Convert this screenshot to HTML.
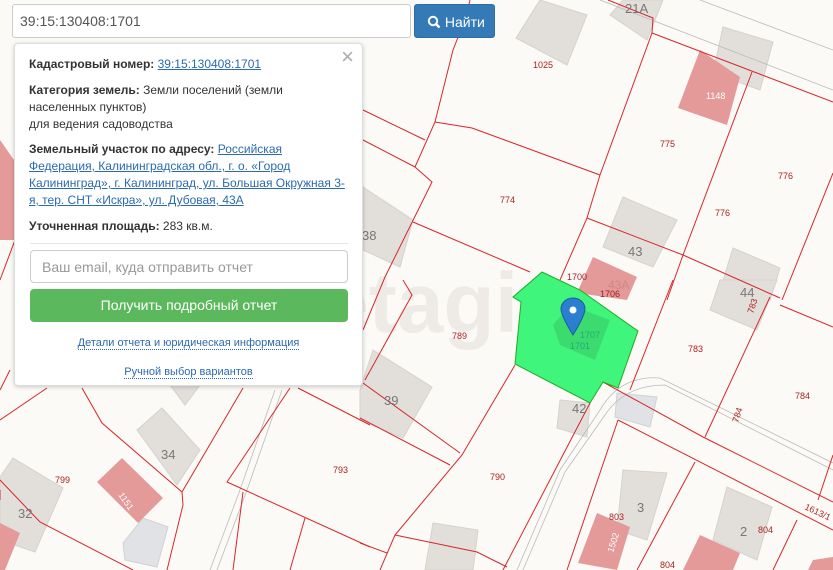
<!DOCTYPE html>
<html><head><meta charset="utf-8"><style>
body{margin:0;width:833px;height:570px;overflow:hidden;position:relative;background:#fbfaf6;font-family:"Liberation Sans",sans-serif}
svg{position:absolute;left:0;top:0}
.inp{position:absolute;left:12px;top:4px;width:399px;height:34px;box-sizing:border-box;border:1px solid #ccc;border-radius:3px;background:#fff;font-size:14px;color:#555;padding:8px 7px}
.btn{position:absolute;left:414px;top:4px;width:81px;height:34px;box-sizing:border-box;background:#337ab7;border:1px solid #2e6da4;border-radius:3px;color:#fff;font-size:14px;padding:8px 0 0 12px}
.pop{position:absolute;left:14px;top:43px;width:349px;height:343px;box-sizing:border-box;background:#fff;border:1px solid #ddd;border-radius:4px;box-shadow:0 1px 4px rgba(0,0,0,.2);font-size:12px;color:#333;line-height:17px}
.pop p{margin:0;position:absolute;left:14px;width:322px}
b{font-weight:bold}
a{color:#2a6ab0;text-decoration:underline}
.x{position:absolute;right:8px;top:4px;font-size:22px;color:#aaa}
.em{position:absolute;left:15px;top:206px;width:318px;height:33px;box-sizing:border-box;border:1px solid #ccc;border-radius:4px;color:#999;font-size:14px;padding:8px 11px}
.gb{position:absolute;left:15px;top:245px;width:318px;height:33px;box-sizing:border-box;background:#5cb85c;border-radius:4px;color:#fff;font-size:14px;text-align:center;padding-top:8px}
.dl{position:absolute;left:0;width:347px;text-align:center;font-size:11px}
.dl span{color:#2a6ab0;border-bottom:1px dotted #2a6ab0}
</style></head><body>
<svg width="833" height="570" viewBox="0 0 833 570">
<text x="322" y="332" font-size="84" fill="#eeebe6" font-family="Liberation Sans" font-weight="bold">etagi</text>
<g fill="#e2dfdb" stroke="#d6d2cd" stroke-width="1">
<polygon points="516,38 540,0 587,15 567,65"/>
<polygon points="610,15 623,0 663,0 647,40"/>
<polygon points="723,27 773,42 760,90 713,73"/>
<polygon points="623,197 677,220 653,267 603,247"/>
<polygon points="733,248 780,268 770,300 720,290"/>
<polygon points="720,280 777,280 757,330 710,310"/>
<polygon points="363,187 413,220 400,267 363,250"/>
<polygon points="373,350 432,387 403,438 360,420 360,390"/>
<polygon points="560,400 590,403 587,437 557,428"/>
<polygon points="623,470 667,473 647,540 617,530"/>
<polygon points="727,487 772,507 757,560 713,540"/>
<polygon points="433,523 478,530 473,570 425,570"/>
<polygon points="137,430 162,408 200,450 177,485"/>
<polygon points="0,477 13,458 63,488 35,552 0,540"/>
<polygon points="170,385 200,385 185,405"/>
</g>
<g fill="#e0e2e6" stroke="#d0d2d6"><polygon points="123,543 143,518 168,527 157,567 125,560"/><polygon points="617,393 657,397 650,427 615,417"/></g>
<g fill="#e59a9a">
<polygon points="700,50 740,77 727,125 678,108"/>
<polygon points="593,257 637,277 627,300 577,293"/>
<polygon points="97,482 122,458 163,498 138,523"/>
<polygon points="597,513 630,527 617,570 578,563"/>
<polygon points="700,535 740,553 733,570 683,570"/>
<polygon points="813,560 833,557 833,570 808,570"/>
<polygon points="0,523 20,533 5,570 0,570"/>
<polygon points="0,140 14,160 14,240 0,240"/>
</g>
<g fill="none" stroke="#bbb" stroke-width="0.8"><path d="M517,570 L560,470 L600,410 Q620,375 660,378 L833,463 M523,570 L565,472 L605,415 Q625,385 665,385 L833,470 M210,570 L240,490 L275,390 M217,570 L247,490 L282,390 M600,0 L833,90 M700,0 L833,50"/></g>
<g fill="none" stroke="#d8262b" stroke-width="1">
<path d="M470,0 L466,17 L453,50 L435,122 L415,167 L432,182 L385,277 L363,330"/>
<path d="M363,110 L425,140 M363,140 L415,167 M435,122 L472,128 L600,175 M413,222 L530,272"/>
<path d="M608,0 L653,18 L652,33 L600,175 L587,218 L560,280"/>
<path d="M587,218 L683,255 L780,298 M652,33 L833,102 M752,72 L683,255 L667,300 M833,173 L782,300"/>
<path d="M403,280 L412,295 L365,380 M363,383 L460,453 M360,418 L450,465"/>
<path d="M515,365 L462,455 L395,535 L380,570 M395,535 L477,552 L507,567 M360,543 L387,553"/>
<path d="M590,403 L503,570 M603,382 L703,437 L833,502 M618,420 L833,530 M618,420 L567,570"/>
<path d="M673,280 L630,390 M770,297 L705,437 M695,462 L637,570 M780,305 L833,327 M818,500 L833,455 M797,520 L773,570"/>
<path d="M0,420 L47,388 M82,388 L102,423 L182,492 L183,505 L167,570 M182,492 L243,388 M290,388 L227,482 L370,547 M243,492 L233,570 M305,518 L290,570 M0,480 L40,522 L133,570 M298,388 L370,425"/>
<path d="M0,280 L15,240 M0,390 L10,370 M0,500 L0,490"/>
</g>
<polygon points="513,297 542,272 580,290 638,331 618,388 603,382 590,403 515,364 521,302" fill="#40f57c" stroke="#2a2" stroke-width="1"/>
<polygon points="553,325 570,305 610,320 595,360 560,345" fill="#3ad56c" opacity=".8"/>
<g font-family="Liberation Sans" font-size="9" fill="#a22">
<text x="533" y="68">1025</text><text x="706" y="99" fill="#fff">1148</text><text x="660" y="147">775</text><text x="778" y="179">776</text><text x="500" y="203">774</text><text x="715" y="216">776</text><text x="567" y="280">1700</text><text x="600" y="297" fill="#922">1706</text><text x="452" y="339">789</text><text x="688" y="352">783</text><text x="570" y="349" fill="#2a7">1701</text><text x="580" y="338" fill="#2a7">1707</text><text x="795" y="399">784</text><text x="333" y="473">793</text><text x="490" y="480">790</text><text x="55" y="483">799</text><text x="609" y="520">803</text><text x="758" y="533">804</text><text x="660" y="568">804</text>
<text transform="translate(753,314) rotate(-72)">783</text><text transform="translate(738,423) rotate(-72)">784</text>
<text transform="translate(804,509) rotate(25)">1613/1</text>
<text transform="translate(118,495) rotate(55)" fill="#fff">1151</text>
<text transform="translate(613,553) rotate(-72)" fill="#fff">1502</text>
</g>
<g font-family="Liberation Sans" font-size="13" fill="#777">
<text x="625" y="13">21A</text><text x="362" y="240">38</text><text x="628" y="256">43</text><text x="608" y="289" font-size="12" fill="#c88">43A</text><text x="740" y="297">44</text><text x="384" y="405">39</text><text x="572" y="413">42</text><text x="161" y="459">34</text><text x="18" y="518">32</text><text x="637" y="512">3</text><text x="740" y="536">2</text>
</g>
<path d="M573,298 c-8,0 -12,6 -12,11 c0,7 12,26 12,26 c0,0 12,-19 12,-26 c0,-5 -4,-11 -12,-11z" fill="#2c7fce" stroke="#1b5fa0"/>
<circle cx="573" cy="310" r="3.5" fill="#fff"/>
</svg>
<div class="inp">39:15:130408:1701</div>
<div class="btn"><svg width="14" height="14" style="position:relative;left:0;top:2px;display:inline-block" viewBox="0 0 14 14"><circle cx="6" cy="6" r="4.2" fill="none" stroke="#fff" stroke-width="2"/><path d="M9,9 L12.5,12.5" stroke="#fff" stroke-width="2.4"/></svg> Найти</div>
<div class="pop">
<span class="x">×</span>
<p style="top:12px"><b>Кадастровый номер:</b> <a>39:15:130408:1701</a></p>
<p style="top:38px"><b>Категория земель:</b> Земли поселений (земли населенных пунктов)<br>для ведения садоводства</p>
<p style="top:97px"><b>Земельный участок по адресу:</b> <a>Российская Федерация, Калининградская обл., г. о. «Город Калининград», г. Калининград, ул. Большая Окружная 3-я, тер. СНТ «Искра», ул. Дубовая, 43А</a></p>
<p style="top:174px"><b>Уточненная площадь:</b> 283 кв.м.</p>
<div style="position:absolute;left:15px;top:199px;width:318px;border-top:1px solid #e5e5e5"></div>
<div class="em">Ваш email, куда отправить отчет</div>
<div class="gb">Получить подробный отчет</div>
<div class="dl" style="top:291px"><span>Детали отчета и юридическая информация</span></div>
<div class="dl" style="top:320px"><span>Ручной выбор вариантов</span></div>
</div>
</body></html>
